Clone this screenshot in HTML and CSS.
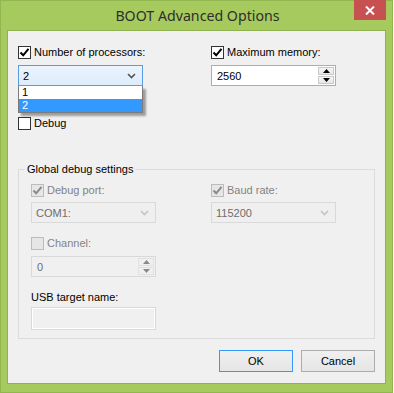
FILE: index.html
```html
<html>
<head>
	<title>BOOT Advanced Options</title>
	<link rel="stylesheet" href="styles.css">
</head>
<body>
	<div class="window">
		<div class="titlebar">
			<span class="title">BOOT Advanced Options</span>
			<div class="close">
				<svg width="10" height="9" viewBox="0 0 10 9"><path d="M1 0.5 L9 8.5 M9 0.5 L1 8.5" stroke="#fff" stroke-width="2"/></svg>
			</div>
		</div>
		<div class="client">
			<div class="pair top">
				<div class="field">
					<label class="check"><span class="box on"><svg width="11" height="11" viewBox="0 0 11 11"><path d="M1.5 5.5 L4.2 8.3 L9.5 1.8" fill="none" stroke="#000" stroke-width="2"/></svg></span>Number of processors:</label>
					<div class="combo open">
						<span>2</span>
						<svg class="chev" width="9" height="6" viewBox="0 0 9 6"><path d="M1 1 L4.5 4.5 L8 1" fill="none" stroke="#555" stroke-width="1.6"/></svg>
						<ul class="dropdown">
							<li>1</li>
							<li class="sel">2</li>
						</ul>
					</div>
				</div>
				<div class="field">
					<label class="check"><span class="box on"><svg width="11" height="11" viewBox="0 0 11 11"><path d="M1.5 5.5 L4.2 8.3 L9.5 1.8" fill="none" stroke="#000" stroke-width="2"/></svg></span>Maximum memory:</label>
					<div class="spin">
						<span>2560</span>
						<div class="spin-btns">
							<div><svg width="7" height="4" viewBox="0 0 7 4"><path d="M0 4 L3.5 0 L7 4 Z" fill="#000"/></svg></div>
							<div><svg width="7" height="4" viewBox="0 0 7 4"><path d="M0 0 L3.5 4 L7 0 Z" fill="#000"/></svg></div>
						</div>
					</div>
				</div>
			</div>

			<label class="check debug"><span class="box"></span>Debug</label>

			<fieldset class="group">
				<legend>Global debug settings</legend>
				<div class="group-body">
					<div class="pair">
						<div class="field disabled">
							<label class="check"><span class="box on"><svg width="11" height="11" viewBox="0 0 11 11"><path d="M1.5 5.5 L4.2 8.3 L9.5 1.8" fill="none" stroke="#8a8a8a" stroke-width="2"/></svg></span>Debug port:</label>
							<div class="combo">
								<span>COM1:</span>
								<svg class="chev" width="9" height="6" viewBox="0 0 9 6"><path d="M1 1 L4.5 4.5 L8 1" fill="none" stroke="#c4c4c4" stroke-width="1.6"/></svg>
							</div>
						</div>
						<div class="field disabled">
							<label class="check"><span class="box on"><svg width="11" height="11" viewBox="0 0 11 11"><path d="M1.5 5.5 L4.2 8.3 L9.5 1.8" fill="none" stroke="#8a8a8a" stroke-width="2"/></svg></span>Baud rate:</label>
							<div class="combo">
								<span>115200</span>
								<svg class="chev" width="9" height="6" viewBox="0 0 9 6"><path d="M1 1 L4.5 4.5 L8 1" fill="none" stroke="#c4c4c4" stroke-width="1.6"/></svg>
							</div>
						</div>
					</div>

					<div class="field disabled channel">
						<label class="check"><span class="box"></span>Channel:</label>
						<div class="spin">
							<span>0</span>
							<div class="spin-btns">
								<div><svg width="7" height="4" viewBox="0 0 7 4"><path d="M0 4 L3.5 0 L7 4 Z" fill="#8a8a8a"/></svg></div>
								<div><svg width="7" height="4" viewBox="0 0 7 4"><path d="M0 0 L3.5 4 L7 0 Z" fill="#8a8a8a"/></svg></div>
							</div>
						</div>
					</div>

					<div class="field usb">
						<div class="label">USB target name:</div>
						<div class="textbox"></div>
					</div>
				</div>
			</fieldset>

			<div class="buttons">
				<button class="default">OK</button>
				<button>Cancel</button>
			</div>
		</div>
	</div>
</body>
</html>
```

FILE: styles.css
```css
body{
	margin: 0;
	background: #fff;
	font-family: "Liberation Sans", Arial, sans-serif;
	font-size: 11px;
	color: #000;
}
.window{
	width: 393px;
	height: 393px;
	box-sizing: border-box;
	background: #a6ca5d;
	border: 1px solid #93b750;
	position: relative;
}
.titlebar{
	height: 29px;
	display: flex;
	align-items: center;
	justify-content: center;
	position: relative;
}
.title{
	font-family: "Noto Sans", "Open Sans", sans-serif;
	font-size: 14.2px;
	color: #2e2e2e;
	margin-top: -1px;
	margin-left: 2px;
}
.close{
	position: absolute;
	top: -1px;
	right: 6px;
	width: 32px;
	height: 20px;
	background: #c75050;
	display: flex;
	align-items: center;
	justify-content: center;
}
.client{
	margin: 0 6px;
	height: 354px;
	box-sizing: border-box;
	background: #f0f0f0;
	border: 1px solid #8fb14f;
	padding: 14px 10px 0 10px;
}
.pair{
	display: grid;
	grid-template-columns: 125px 125px;
	column-gap: 68px;
}
.field{
	display: flex;
	flex-direction: column;
}
.check{
	display: flex;
	align-items: center;
	height: 14px;
	line-height: 14px;
	white-space: nowrap;
}
.box{
	width: 11px;
	height: 11px;
	border: 1px solid #333;
	background: #fff;
	margin-right: 3px;
	display: flex;
	align-items: center;
	justify-content: center;
	flex: none;
}
.combo, .spin{
	height: 21px;
	box-sizing: border-box;
	margin-top: 6px;
	display: flex;
	align-items: center;
	position: relative;
}
.combo{
	border: 1px solid #569de5;
	background: linear-gradient(#ecf4fc, #dcecfc);
	padding: 0 6px 0 4px;
	justify-content: space-between;
}
.dropdown{
	position: absolute;
	left: -1px;
	top: 20px;
	width: 125px;
	margin: 0;
	padding: 0;
	list-style: none;
	background: #fff;
	border: 1px solid #7a7a7a;
	border-top: none;
	box-sizing: border-box;
	box-shadow: 3px 3px 2px rgba(0, 0, 0, 0.35);
	z-index: 2;
}
.dropdown li{
	height: 13px;
	line-height: 13px;
	padding-left: 3px;
}
.dropdown li.sel{
	background: #3399ff;
	color: #fff;
}
.spin{
	border: 1px solid #abadb3;
	background: #fff;
	padding-left: 5px;
	justify-content: space-between;
}
.spin-btns{
	display: flex;
	flex-direction: column;
	height: 100%;
	width: 16px;
	margin-right: 1px;
	padding: 1px 0;
	box-sizing: border-box;
	gap: 1px;
}
.spin-btns div{
	flex: 1;
	border: 1px solid #c9c9c9;
	background: linear-gradient(#f6f6f6, #e6e6e6);
	display: flex;
	align-items: center;
	justify-content: center;
}
.debug{
	margin-top: 30px;
}
.group{
	margin: 32px 0 0 0;
	padding: 0;
	min-width: 0;
	border: 1px solid #dcdcdc;
}
.group legend{
	margin-left: 6px;
	padding: 0 2px;
	line-height: 14px;
}
.group-body{
	padding: 7px 12px 8px 12px;
}
.group .pair{
	column-gap: 55px;
}
.group .combo{
	margin-top: 5px;
}
.disabled .check{
	color: #838383;
}
.disabled .box{
	border-color: #bcbcbc;
	background: #e6e6e6;
}
.disabled .combo{
	border-color: #d9d9d9;
	background: #efefef;
	color: #6d6d6d;
}
.disabled .spin{
	border-color: #d9d9d9;
	background: #f0f0f0;
	color: #6d6d6d;
}
.disabled .spin-btns div{
	border-color: #e0e0e0;
	background: #f0f0f0;
}
.channel{
	width: 125px;
	margin-top: 13px;
}
.usb{
	width: 125px;
	margin-top: 13px;
}
.label{
	height: 14px;
	line-height: 14px;
}
.textbox{
	margin-top: 3px;
	height: 23px;
	box-sizing: border-box;
	border: 1px solid #d9d9d9;
	box-shadow: inset 0 0 0 1px #fff;
	background: #f0f0f0;
}
.buttons{
	display: flex;
	justify-content: flex-end;
	gap: 8px;
	margin-top: 11px;
}
button{
	width: 74px;
	height: 22px;
	font-family: "Liberation Sans", Arial, sans-serif;
	font-size: 11px;
	color: #000;
	border: 1px solid #acacac;
	background: linear-gradient(#f0f0f0, #e5e5e5);
	padding: 0;
}
button.default{
	border-color: #3399ff;
}
```
